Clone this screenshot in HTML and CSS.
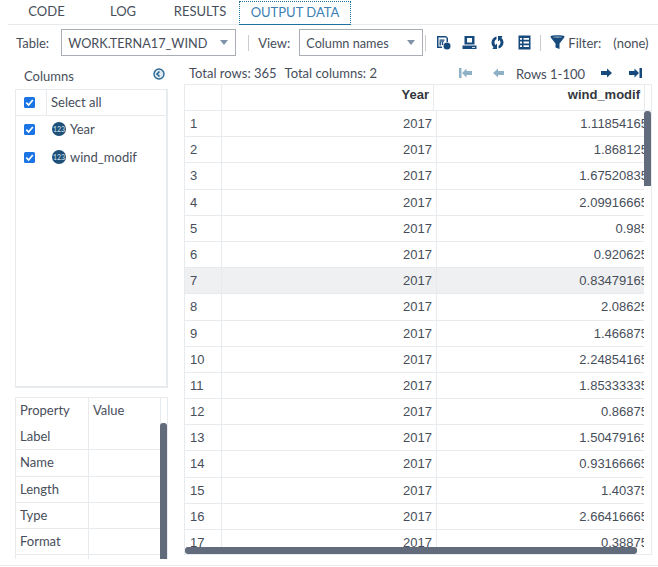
FILE: index.html
```html
<!DOCTYPE html>
<html lang="en">
<head>
    <meta charset="UTF-8">
    <title>Output Data</title>
    <link rel="stylesheet" href="styles.css">
</head>
<body>
    <div class="app">
        <div class="tabs">
            <div class="tab">CODE</div>
            <div class="tab">LOG</div>
            <div class="tab">RESULTS</div>
            <div class="tab active">OUTPUT DATA</div>
        </div>

        <div class="toolbar">
            <span class="tool-label">Table:</span>
            <div class="select select-table">WORK.TERNA17_WIND<i class="caret"></i></div>
            <span class="sep"></span>
            <span class="tool-label view-label">View:</span>
            <div class="select select-view">Column names<i class="caret"></i></div>
            <span class="sep sep-tight"></span>
            <svg class="icon icon-a" viewBox="0 0 15 15"><path d="M1 1h9l2 2v4h-1.500V3L9.500 2.500H2.500v9H6V13H1z" fill="#174a7c"/><path d="M3.500 4.500h5v1.200h-5zM3.500 7h1.400v3.500H3.500zM5.800 7h1.400v3H5.800zM3.500 6h4.500v.8H3.500z" fill="#174a7c"/><circle cx="11" cy="11" r="3.500" fill="#174a7c"/></svg>
            <svg class="icon icon-b" viewBox="0 0 15 15"><path d="M2.500 1h10v8.500h-10zM5 3v4.500h5V3z" fill="#174a7c" fill-rule="evenodd"/><path d="M0.500 10.500h14V14H0.500z" fill="#174a7c"/><path d="M10 12h3v.8h-3z" fill="#fff"/></svg>
            <svg class="icon icon-c" viewBox="0 0 15 15"><path d="M6.500 1.500C3.500 2.200 1.500 4.500 1.500 7.500c0 2 .8 3.500 2 4.600L2.500 14H7V8.500l-1.500 1.600C4.800 9.400 4.500 8.500 4.500 7.500c0-1.500.8-2.600 2-3.200z" fill="#174a7c"/><path d="M8.500 13.500c3-.7 5-3 5-6 0-2-.8-3.500-2-4.600L12.500 1H8v5.500l1.500-1.600c.7.700 1 1.600 1 2.600 0 1.500-.8 2.600-2 3.200z" fill="#174a7c"/></svg>
            <svg class="icon icon-d" viewBox="0 0 13 15"><path d="M0.500 0.500h12v14h-12zM2 3v1.800h2V3zm3.500 0v1.800h5.500V3zM2 6.600v1.800h2V6.600zm3.500 0v1.800h5.500V6.600zM2 10.200V12h2v-1.800zm3.500 0V12h5.500v-1.800z" fill="#174a7c" fill-rule="evenodd"/></svg>
            <span class="sep sep-filter"></span>
            <svg class="icon icon-funnel" viewBox="0 0 15 15"><path d="M0.500 1.500C0.500 .8 3.500 .3 7.500 .3s7 .5 7 1.200c0 .7-.4 1.300-1 2L9.500 8.500V14l-4-1.500v-4L1.500 3.500c-.6-.7-1-1.300-1-2z" fill="#174a7c"/><path d="M2.500 2c1.500.5 8.500.5 10 0-1.500-.5-8.500-.5-10 0z" fill="#fff"/></svg>
            <span class="tool-label filter-label">Filter:</span>
            <span class="tool-label filter-value">(none)</span>
        </div>

        <div class="main">
            <div class="side">
                <div class="side-head">
                    <span>Columns</span>
                    <svg class="collapse" viewBox="0 0 12 12"><circle cx="6" cy="6" r="5" fill="#dfe8ef" stroke="#2a6a97" stroke-width="1.400"/><path d="M6.500 3.500 4 6l2.500 2.500" fill="none" stroke="#2a6a97" stroke-width="1.600"/></svg>
                </div>
                <div class="col-list">
                    <div class="col-all">
                        <div class="check-cell"><svg class="check" viewBox="0 0 11 11"><use href="#tick"/></svg></div>
                        <div class="col-all-label">Select all</div>
                    </div>
                    <div class="col-item">
                        <svg class="check" viewBox="0 0 11 11"><use href="#tick"/></svg>
                        <span class="badge">123</span>Year
                    </div>
                    <div class="col-item">
                        <svg class="check" viewBox="0 0 11 11"><use href="#tick"/></svg>
                        <span class="badge">123</span>wind_modif
                    </div>
                </div>
                <div class="props">
                    <div class="prop-row prop-head"><span>Property</span><span>Value</span></div>
                    <div class="prop-row"><span>Label</span><span></span></div>
                    <div class="prop-row"><span>Name</span><span></span></div>
                    <div class="prop-row"><span>Length</span><span></span></div>
                    <div class="prop-row"><span>Type</span><span></span></div>
                    <div class="prop-row"><span>Format</span><span></span></div>
                    <div class="prop-row"><span></span><span></span></div>
                    <div class="prop-thumb"></div>
                </div>
            </div>

            <div class="data">
                <div class="data-info">
                    <span>Total rows: 365</span>
                    <span class="total-cols">Total columns: 2</span>
                    <svg class="nav nav-first" viewBox="0 0 13 10"><path d="M0 0h2.500v10H0zM3 5 7.500 .5V3H13v4H7.500v2.500z" fill="#8fb1c6"/></svg>
                    <svg class="nav nav-prev" viewBox="0 0 11 10"><path d="M0 5 5 .5V3h6v4H5v2.500z" fill="#8fb1c6"/></svg>
                    <span class="rows-label">Rows 1-100</span>
                    <svg class="nav nav-next" viewBox="0 0 11 10"><path d="M11 5 6 .5V3H0v4h6v2.500z" fill="#174a7c"/></svg>
                    <svg class="nav nav-last" viewBox="0 0 13 10"><path d="M13 0h-2.500v10H13zM10 5 5.500 .5V3H0v4h5.500v2.500z" fill="#174a7c"/></svg>
                </div>
                <div class="grid" id="grid">
                    <div class="grid-head">
                        <div class="hcell"></div>
                        <div class="hcell">Year</div>
                        <div class="hcell hcell-last">wind_modif</div>
                    </div>
                    <div class="grid-body" id="gridBody"></div>
                    <div class="thumb-v"></div>
                    <div class="thumb-h"></div>
                </div>
            </div>
        </div>
    </div>

    <svg class="defs" width="0" height="0">
        <symbol id="tick" viewBox="0 0 11 11">
            <rect width="11" height="11" rx="1.500" fill="#1b74e4"/>
            <path d="M2.300 5.700 4.600 8 8.800 3" fill="none" stroke="#fff" stroke-width="1.700"/>
        </symbol>
    </svg>

    <script src="script.js"></script>
</body>
</html>
```

FILE: styles.css
```css
* {
    box-sizing: border-box;
}

html, body {
    margin: 0;
    padding: 0;
    height: 100%;
    overflow: hidden;
}

body {
    font-family: Lato, "Open Sans", sans-serif;
    font-size: 13px;
    color: #474e5a;
    background-color: #fff;
}

.defs {
    display: block;
}

.app {
    height: 566px;
    border-bottom: 1px solid #e8ebee;
}

/* tabs */
.tabs {
    display: grid;
    grid-template-columns: 77px 76px 78px 112px;
    height: 25px;
    margin-left: 8px;
    border-bottom: 1px solid #e8ebee;
}

.tab {
    height: 24px;
    margin-top: 1px;
    line-height: 20px;
    text-align: center;
}

.tab.active {
    color: #3b7fb5;
    border: 1px dotted #1f6f9f;
    border-bottom: 1px solid #1f6f9f;
}

/* toolbar */
.toolbar {
    display: flex;
    align-items: center;
    height: 27px;
    margin-top: 4px;
    padding-left: 16px;
}

.select {
    display: flex;
    align-items: center;
    justify-content: space-between;
    height: 27px;
    padding: 0 7px 0 6px;
    border: 1px solid #a9aeb5;
    font-size: 12.7px;
}

.select-table {
    width: 175px;
    margin-left: 12px;
}

.select-view {
    width: 124px;
    margin-left: 9px;
}

.caret {
    width: 0;
    height: 0;
    border-left: 4px solid transparent;
    border-right: 4px solid transparent;
    border-top: 5px solid #7f92a8;
}

.sep {
    width: 1px;
    height: 16px;
    margin-left: 12px;
    background-color: #c9cdd2;
}

.sep-tight {
    margin-left: 2px;
}

.sep-filter {
    margin-left: 9px;
}

.view-label {
    margin-left: 9px;
}

.icon {
    width: 15px;
    height: 15px;
}

.icon-a { margin-left: 10px; }
.icon-b { margin-left: 11px; }
.icon-c { margin-left: 13px; }
.icon-d { margin-left: 13px; width: 13px; }
.icon-funnel { margin-left: 9px; }

.filter-label { margin-left: 3px; }
.filter-value { margin-left: 12px; }

/* main area */
.main {
    display: flex;
    margin-top: 6px;
}

.side {
    width: 153px;
    margin-left: 15px;
}

.side-head {
    display: flex;
    justify-content: space-between;
    height: 27px;
    padding: 6px 3px 0 9px;
}

.collapse {
    width: 12px;
    height: 12px;
}

.col-list {
    height: 299px;
    border: 1px solid #e8ebee;
    border-bottom-width: 2px;
    border-right-width: 2px;
}

.col-all {
    display: flex;
    height: 26px;
    border-bottom: 1px solid #e8ebee;
}

.check-cell {
    display: flex;
    align-items: center;
    width: 31px;
    padding-left: 8px;
    border-right: 1px solid #e8ebee;
}

.col-all-label {
    padding-left: 4px;
    line-height: 25px;
}

.check {
    width: 11px;
    height: 11px;
    flex: none;
}

.col-item {
    display: flex;
    align-items: center;
    height: 28px;
    padding: 0 0 2px 8px;
}

.badge {
    width: 14px;
    height: 14px;
    margin: 0 4px 0 17px;
    border-radius: 50%;
    background-color: #1d4f78;
    color: #d5e2ec;
    font-size: 7px;
    line-height: 14px;
    text-align: center;
}

.props {
    position: relative;
    height: 162px;
    margin-top: 9px;
    overflow: hidden;
    border: 1px solid #e8ebee;
    border-bottom: 0;
}

.prop-row {
    display: grid;
    grid-template-columns: 73px 72px;
    height: 26.2px;
    border-bottom: 1px solid #e8ebee;
    line-height: 25px;
}

.prop-row span {
    padding-left: 4px;
    border-right: 1px solid #e8ebee;
}

.prop-head {
    border-bottom: 0;
}

.prop-thumb {
    position: absolute;
    right: 0;
    top: 25px;
    bottom: 0;
    width: 7px;
    border-radius: 3px 3px 0 0;
    background-color: #626b7c;
}

/* data grid */
.data {
    width: 468px;
    margin-left: 16px;
}

.data-info {
    display: flex;
    align-items: center;
    height: 20px;
    padding: 2px 0 0 5px;
}

.total-cols {
    margin-left: 8px;
}

.nav {
    height: 10px;
    width: 13px;
}

.nav-first { margin-left: 82px; }
.nav-prev { margin-left: 21px; width: 11px; }
.rows-label { margin: 2px 0 0 12px; }
.nav-next { margin-left: 16px; width: 11px; }
.nav-last { margin-left: 17px; }

.grid {
    position: relative;
    width: 468px;
    height: 471px;
    margin-top: 2px;
    overflow: hidden;
    border: 1px solid #e8ebee;
}

.grid-head {
    display: grid;
    grid-template-columns: 37px 212px 211px;
    height: 26px;
    border-bottom: 1px solid #e8ebee;
    font-family: "Liberation Sans", Arial, sans-serif;
    font-weight: bold;
    color: #33373e;
    line-height: 19px;
    text-align: right;
}

.hcell {
    padding-right: 4px;
    border-right: 1px solid #e8ebee;
}

.grid-body {
    width: 459px;
    overflow: hidden;
    font-family: "Liberation Sans", Arial, sans-serif;
}

.row {
    display: grid;
    grid-template-columns: 37px 215px 211px;
    width: 463px;
    height: 26.2px;
    border-bottom: 1px solid #e8ebee;
    line-height: 26px;
}

.row.selected {
    background-color: #eff0f2;
}

.cell {
    border-right: 1px solid #e8ebee;
    text-align: right;
    padding-right: 4px;
}

.cell-index {
    padding-left: 5px;
    text-align: left;
}

.cell-value {
    padding-right: 0;
    border-right: 0;
}

.thumb-v {
    position: absolute;
    left: 459px;
    top: 26px;
    width: 7px;
    height: 75px;
    border-radius: 3px 3px 0 0;
    background-color: #626b7c;
}

.thumb-h {
    position: absolute;
    left: 0;
    bottom: 0;
    width: 452px;
    height: 7px;
    border-radius: 3px;
    background-color: #626b7c;
}
```

FILE: script.js
```js
const valores = [
    '1.11854165', '1.868125', '1.67520835', '2.09916665', '0.985', '0.920625',
    '0.83479165', '2.08625', '1.466875', '2.24854165', '1.85333335', '0.86875',
    '1.50479165', '0.93166665', '1.40375', '2.66416665', '0.38875'
];

const corpo = document.getElementById('gridBody');

valores.forEach(function (valor, i) {
    const linha = document.createElement('div');
    linha.className = i === 6 ? 'row selected' : 'row';
    linha.innerHTML =
        '<div class="cell cell-index">' + (i + 1) + '</div>' +
        '<div class="cell">2017</div>' +
        '<div class="cell cell-value">' + valor + '</div>';
    corpo.appendChild(linha);
});
```
